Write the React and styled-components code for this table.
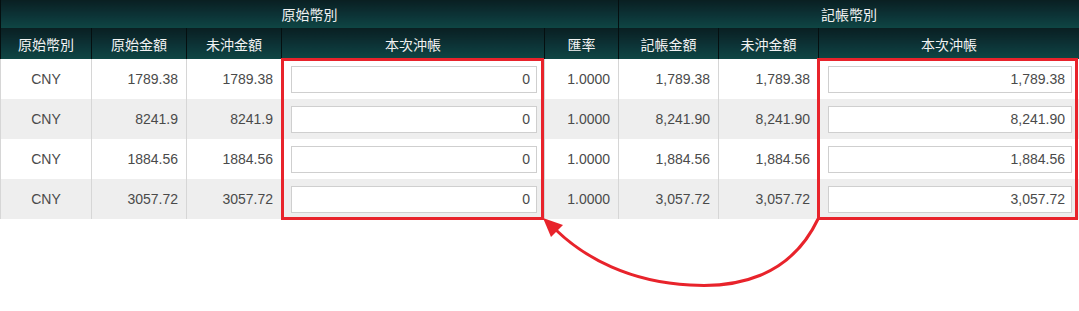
import React from "react"
import styled, { createGlobalStyle } from "styled-components"

const GlobalStyle = createGlobalStyle`
  body {
    margin: 0;
    background: #fff;
    font-family: "Liberation Sans", "Noto Sans CJK TC", Arial, sans-serif;
  }
`

const Stage = styled.div`
  position: relative;
  width: 1079px;
  height: 311px;
  overflow: hidden;
`

const Table = styled.table`
  width: 1079px;
  border-collapse: collapse;
  table-layout: fixed;
  font-size: 14px;
`

const HeadCell = styled.th`
  height: ${p => p.$h}px;
  padding: 0;
  font-weight: normal;
  font-size: 14px;
  font-family: "Noto Sans CJK TC", "Liberation Sans", sans-serif;
  color: #f2f2f2;
  text-align: center;
  background: linear-gradient(to bottom, #0a1f22 0%, #0c3336 55%, #0e4644 100%);
  border-left: 1px solid #050f10;
  border-right: 1px solid #050f10;
`

const Row = styled.tr`
  background: ${p => (p.$odd ? "#eeeeee" : "#fff")};
`

const Cell = styled.td`
  height: 40px;
  padding: 0 8px;
  color: #4a4a4a;
  text-align: ${p => p.$align || "right"};
  border-left: 1px solid #d6d6d6;
  border-right: 1px solid #d6d6d6;
  white-space: nowrap;
`

const InputCell = styled.td`
  height: 40px;
  padding: 0 7px 0 9px;
  border-left: 1px solid #d6d6d6;
  border-right: 1px solid #d6d6d6;
`

const Amount = styled.input`
  box-sizing: border-box;
  display: block;
  width: 100%;
  height: 27px;
  padding: 0 6px;
  border: 1px solid #cfcfcf;
  background: #fff;
  font-family: "Liberation Sans", Arial, sans-serif;
  font-size: 14px;
  color: #4a4a4a;
  text-align: right;
  outline: none;
`

const Highlight = styled.div`
  position: absolute;
  top: 58px;
  left: ${p => p.$left}px;
  width: ${p => p.$width}px;
  height: 162px;
  box-sizing: border-box;
  border: 3px solid #e8232b;
  pointer-events: none;
`

const Arrow = styled.svg`
  position: absolute;
  left: 0;
  top: 0;
  pointer-events: none;
`

const cols = [91, 95, 95, 263, 74, 100, 100, 261]

const rows = [
  { orig: "1789.38", open: "1789.38", book: "1,789.38" },
  { orig: "8241.9", open: "8241.9", book: "8,241.90" },
  { orig: "1884.56", open: "1884.56", book: "1,884.56" },
  { orig: "3057.72", open: "3057.72", book: "3,057.72" },
]

export default function App() {
  return (
    <Stage>
      <GlobalStyle />
      <Table>
        <colgroup>
          {cols.map((w, i) => <col key={i} style={{ width: w }} />)}
        </colgroup>
        <thead>
          <tr>
            <HeadCell $h={28} colSpan={5}>原始幣別</HeadCell>
            <HeadCell $h={28} colSpan={3}>記帳幣別</HeadCell>
          </tr>
          <tr>
            <HeadCell $h={31}>原始幣別</HeadCell>
            <HeadCell $h={31}>原始金額</HeadCell>
            <HeadCell $h={31}>未沖金額</HeadCell>
            <HeadCell $h={31}>本次沖帳</HeadCell>
            <HeadCell $h={31}>匯率</HeadCell>
            <HeadCell $h={31}>記帳金額</HeadCell>
            <HeadCell $h={31}>未沖金額</HeadCell>
            <HeadCell $h={31}>本次沖帳</HeadCell>
          </tr>
        </thead>
        <tbody>
          {rows.map((r, i) => (
            <Row key={i} $odd={i % 2 === 1}>
              <Cell $align="center">CNY</Cell>
              <Cell>{r.orig}</Cell>
              <Cell>{r.open}</Cell>
              <InputCell><Amount defaultValue="0" /></InputCell>
              <Cell>1.0000</Cell>
              <Cell>{r.book}</Cell>
              <Cell>{r.book}</Cell>
              <InputCell><Amount defaultValue={r.book} /></InputCell>
            </Row>
          ))}
        </tbody>
      </Table>

      <Highlight $left={281} $width={263} />
      <Highlight $left={817} $width={261} />

      <Arrow width="1079" height="311" viewBox="0 0 1079 311">
        <path
          d="M818 219 C 790 278, 735 288, 690 285 C 630 282, 585 258, 556 230"
          fill="none"
          stroke="#e8232b"
          strokeWidth="3"
        />
        <polygon points="543,218 551,237 563,225" fill="#e8232b" />
      </Arrow>
    </Stage>
  )
}
